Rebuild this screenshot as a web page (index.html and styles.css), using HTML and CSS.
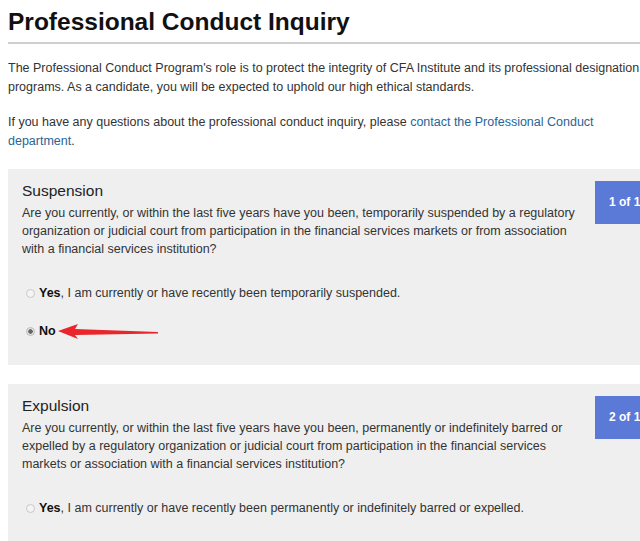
FILE: index.html
```html
<!DOCTYPE html>
<html>
<head>
<meta charset="utf-8">
<link rel="stylesheet" href="styles.css">
</head>
<body>
<div class="page">
  <h1 class="title">Professional Conduct Inquiry</h1>
  <p class="intro">The Professional Conduct Program's role is to protect the integrity of CFA Institute and its professional designation programs. As a candidate, you will be expected to uphold our high ethical standards.</p>
  <p class="intro">If you have any questions about the professional conduct inquiry, please <a class="link" href="#">contact the Professional Conduct department</a>.</p>

  <section class="card">
    <div class="card-body">
      <h2 class="card-title">Suspension</h2>
      <p class="question">Are you currently, or within the last five years have you been, temporarily suspended by a regulatory organization or judicial court from participation in the financial services markets or from association with a financial services institution?</p>
      <div class="options">
        <label class="option"><span class="radio"></span><span><b>Yes</b>, I am currently or have recently been temporarily suspended.</span></label>
        <label class="option"><span class="radio checked"></span><b>No</b>
          <svg class="arrow" width="110" height="18" viewBox="0 0 110 18"><path d="M0 8 L20 1 L17 6 L100 9 L100 10.5 L17 12 L20 16 Z" fill="#e8262c"/></svg>
        </label>
      </div>
    </div>
    <div class="badge">1 of 1</div>
  </section>

  <section class="card">
    <div class="card-body">
      <h2 class="card-title">Expulsion</h2>
      <p class="question">Are you currently, or within the last five years have you been, permanently or indefinitely barred or expelled by a regulatory organization or judicial court from participation in the financial services markets or association with a financial services institution?</p>
      <div class="options">
        <label class="option"><span class="radio"></span><span><b>Yes</b>, I am currently or have recently been permanently or indefinitely barred or expelled.</span></label>
        <label class="option"><span class="radio"></span><b>No</b></label>
      </div>
    </div>
    <div class="badge">2 of 1</div>
  </section>
</div>
</body>
</html>
```

FILE: styles.css
```css
html, body {
  margin: 0;
  padding: 0;
  background: #fff;
  overflow: hidden;
}
.page {
  width: 680px;
  padding-left: 8px;
  font-family: "Liberation Sans", Arial, sans-serif;
  color: #333;
  font-size: 12.5px;
}
.title {
  margin: 0;
  padding-top: 6px;
  height: 36px;
  font-size: 24.5px;
  line-height: 32px;
  font-weight: bold;
  color: #111;
  border-bottom: 2px solid #cfcfcf;
}
.intro {
  margin: 15px 0 0;
  line-height: 18.5px;
  width: 634px;
}
.intro + .intro { margin-top: 17px; }
.link { color: #2a6496; text-decoration: none; }
.card {
  display: flex;
  gap: 14px;
  align-items: flex-start;
  background: #efefef;
  margin-top: 19px;
  padding: 12px 0 25px 14px;
}
.card + .card { margin-top: 19px; }
.card-body { width: 559px; }
.card-title {
  margin: 0;
  font-size: 15.5px;
  font-weight: normal;
  color: #222;
  line-height: 20px;
}
.question {
  margin: 3px 0 0;
  line-height: 18px;
}
.options {
  display: flex;
  flex-direction: column;
  gap: 20px;
  margin-top: 26px;
}
.option {
  display: flex;
  align-items: center;
  gap: 4px;
  padding-left: 4px;
  line-height: 18px;
  position: relative;
}
.option b { color: #111; }
.radio {
  width: 9px;
  height: 9px;
  border-radius: 50%;
  border: 1px solid #c8c8c8;
  background: #f4f4f4;
  box-sizing: border-box;
}
.radio.checked {
  background: radial-gradient(circle, #666 0 2px, #e6e6e6 2.5px);
  border-color: #bbb;
}
.arrow {
  position: absolute;
  left: 36px;
  top: 1px;
}
.badge {
  flex: none;
  width: 66px;
  height: 43px;
  box-sizing: border-box;
  background: #5b79d6;
  color: #fff;
  font-weight: bold;
  font-size: 12px;
  padding: 14px 0 0 14px;
}
```
